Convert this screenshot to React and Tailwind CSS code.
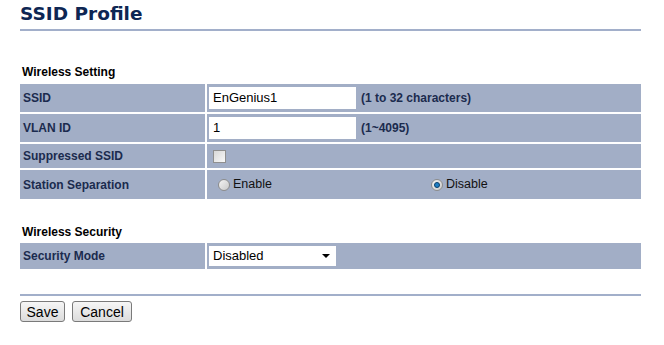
import React from "react";

const Radio = ({ checked }) => (
  <span className="relative inline-block w-[12px] h-[12px] rounded-full border border-[#8c8c8c] bg-gradient-to-br from-[#f4f4f4] to-[#c9c9c9]">
    {checked && (
      <span className="absolute left-[2px] top-[2px] w-[6px] h-[6px] rounded-full bg-[#1f7fc4] border border-[#0c3f6a]" />
    )}
  </span>
);

const Label = ({ children }) => (
  <div className="bg-[#a2aec6] flex items-center pl-[3px] text-[12px] font-bold text-[#1b2b4e]">{children}</div>
);

export default function App() {
  return (
    <div className="w-[664px] h-[345px] bg-white" style={{ fontFamily: '"Liberation Sans", Arial, sans-serif' }}>
      <div className="ml-[20px] w-[621px] pt-[3px]">
        <div className="text-[18.5px] leading-[22px] font-bold text-[#0e2653]" style={{ fontFamily: '"DejaVu Sans", Verdana, sans-serif' }}>
          SSID Profile
        </div>
        <div className="mt-[4px] h-[2px] bg-[#a2afca]" />

        <div className="mt-[34px] pl-[2px] text-[12px] leading-[14px] font-bold text-black">Wireless Setting</div>
        <div className="mt-[5px] grid grid-cols-[185px_434px] gap-[2px]">
          <Label><span className="h-[28px] flex items-center">SSID</span></Label>
          <div className="bg-[#a2aec6] flex items-center pl-[2px]">
            <div className="w-[147px] h-[22px] bg-white flex items-center pl-[4px] text-[13px] text-black">EnGenius1</div>
            <span className="ml-[5px] text-[12px] font-bold text-[#1b2b4e]">(1 to 32 characters)</span>
          </div>

          <Label><span className="h-[28px] flex items-center">VLAN ID</span></Label>
          <div className="bg-[#a2aec6] flex items-center pl-[2px]">
            <div className="w-[147px] h-[22px] bg-white flex items-center pl-[4px] text-[13px] text-black">1</div>
            <span className="ml-[5px] text-[12px] font-bold text-[#1b2b4e]">(1~4095)</span>
          </div>

          <Label><span className="h-[24px] flex items-center">Suppressed SSID</span></Label>
          <div className="bg-[#a2aec6] flex items-center pl-[6px]">
            <span className="w-[13px] h-[13px] border border-[#8f8f8f] bg-gradient-to-br from-[#d8d8d8] to-[#f8f8f8]" />
          </div>

          <Label><span className="h-[29px] flex items-center">Station Separation</span></Label>
          <div className="bg-[#a2aec6] flex items-center pl-[11px] text-[12.5px] text-[#111]">
            <div className="w-[213px] flex items-center gap-[3px]">
              <Radio />
              <span>Enable</span>
            </div>
            <div className="flex items-center gap-[3px]">
              <Radio checked />
              <span>Disable</span>
            </div>
          </div>
        </div>

        <div className="mt-[26px] pl-[2px] text-[12px] leading-[14px] font-bold text-black">Wireless Security</div>
        <div className="mt-[4px] grid grid-cols-[185px_434px] gap-[2px]">
          <Label><span className="h-[26px] flex items-center">Security Mode</span></Label>
          <div className="bg-[#a2aec6] flex items-center pl-[2px]">
            <div className="w-[127px] h-[20px] bg-white flex items-center pl-[4px] pr-[6px] text-[13px] text-black justify-between">
              <span>Disabled</span>
              <span className="w-0 h-0 border-l-[4px] border-r-[4px] border-t-[4px] border-l-transparent border-r-transparent border-t-black" />
            </div>
          </div>
        </div>

        <div className="mt-[25px] h-[2px] bg-[#a2afca]" />

        <div className="mt-[5px] flex gap-[7px]">
          <button className="w-[45px] h-[21px] rounded-[3px] border border-[#7a7a7a] bg-gradient-to-b from-[#f6f6f6] to-[#dcdcdc] text-[14px] text-black leading-none">Save</button>
          <button className="w-[60px] h-[21px] rounded-[3px] border border-[#7a7a7a] bg-gradient-to-b from-[#f6f6f6] to-[#dcdcdc] text-[14px] text-black leading-none">Cancel</button>
        </div>
      </div>
    </div>
  );
}
